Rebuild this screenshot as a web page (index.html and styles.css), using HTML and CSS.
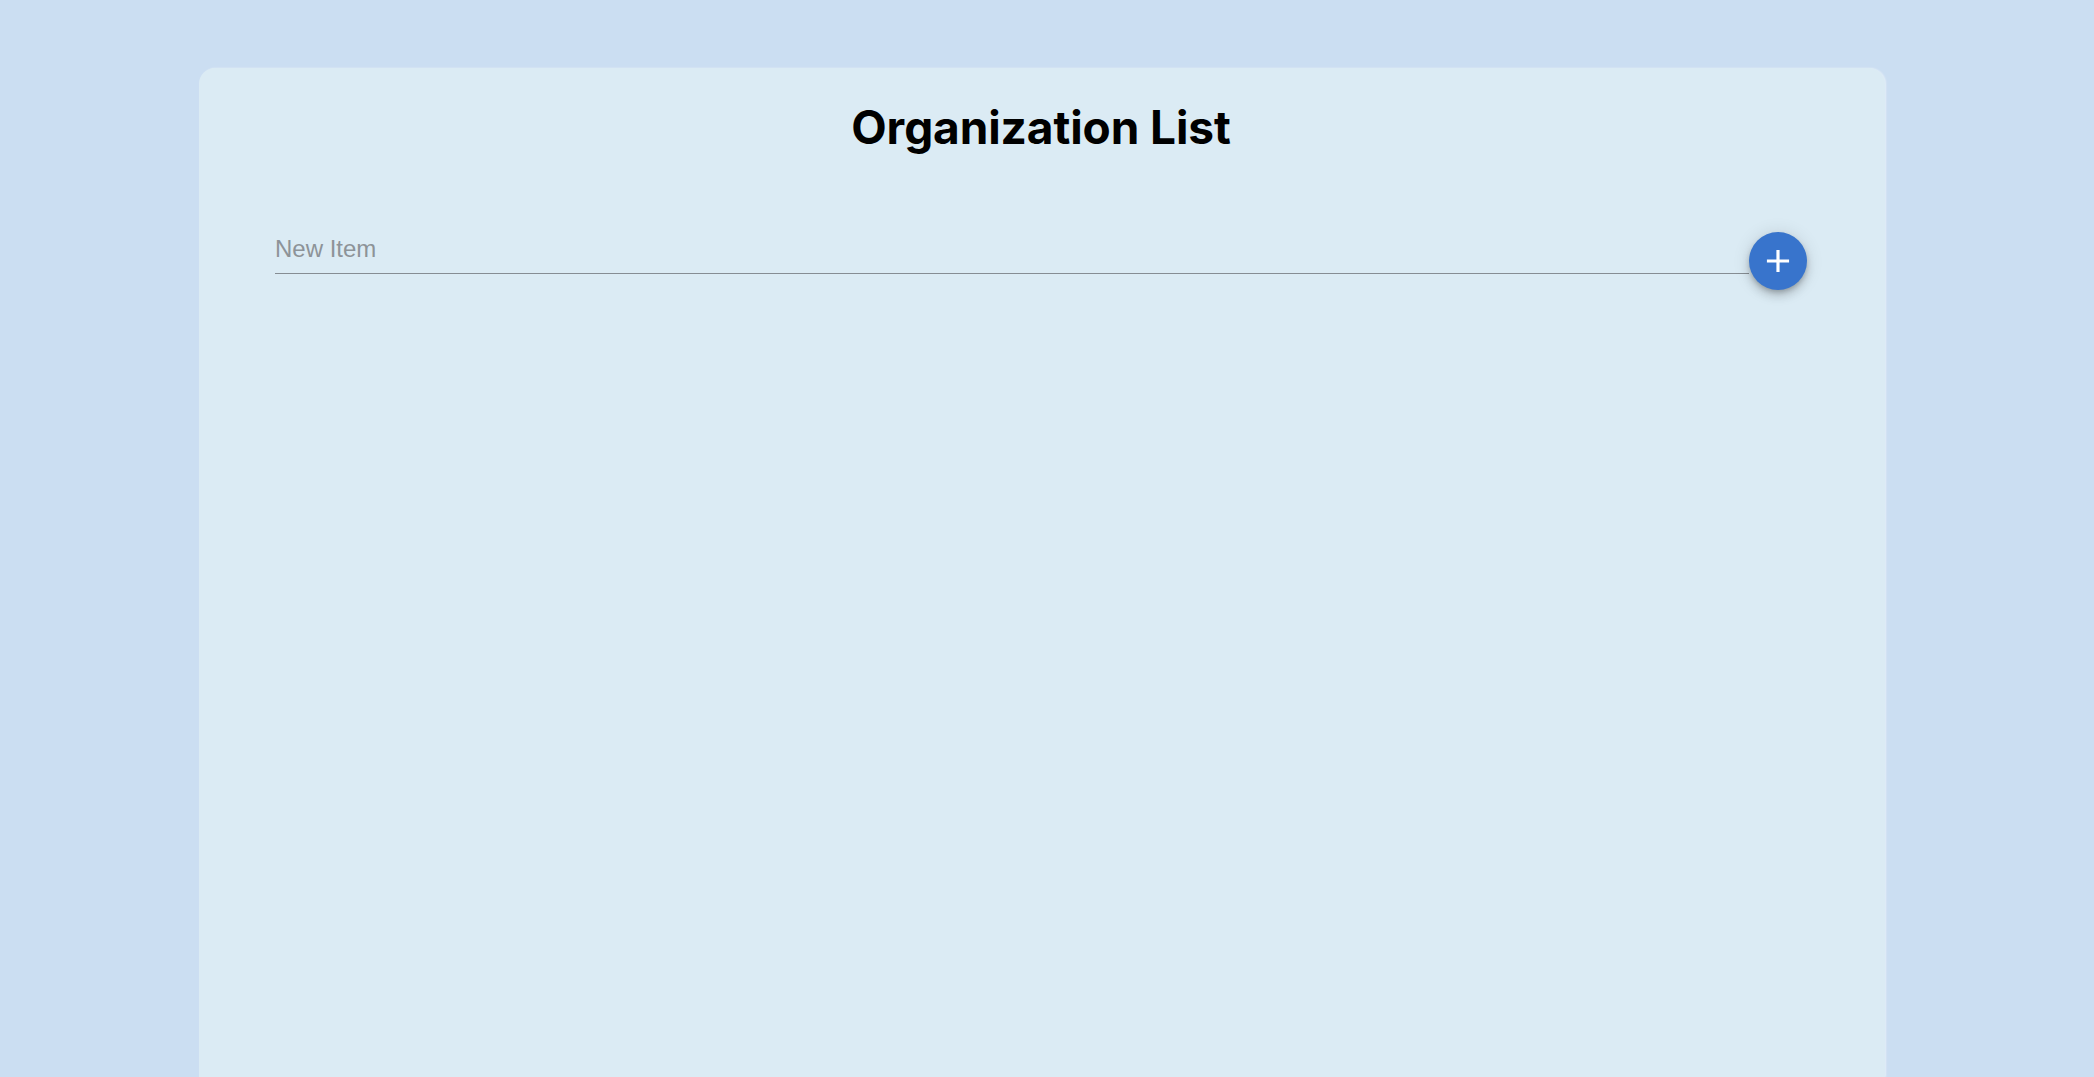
FILE: index.html
```html
<!DOCTYPE html>
<html lang="en">
<head>
<meta charset="utf-8">
<title>Organization List</title>
<link rel="stylesheet" href="styles.css">
</head>
<body>
  <main class="card">
    <h1 class="title">Organization List</h1>
    <form class="add-row">
      <input class="new-item" type="text" placeholder="New Item">
      <button class="fab" type="button" aria-label="Add">
        <svg viewBox="0 0 24 24" width="38" height="38"><path d="M19 13h-6v6h-2v-6H5v-2h6V5h2v6h6v2z" fill="#ffffff"/></svg>
      </button>
    </form>
  </main>
</body>
</html>
```

FILE: styles.css
```css
html, body {
  margin: 0;
  padding: 0;
  height: 100%;
  overflow: hidden;
}
body {
  background: #cbdef2;
  font-family: "Liberation Sans", Arial, sans-serif;
}
.card {
  box-sizing: border-box;
  margin: 68px 0 0 199px;
  width: 1686px;
  height: 1009px;
  background: #dbebf4;
  border-radius: 16px 16px 0 0;
  padding: 32px 78px 0 76px;
  box-shadow: 1px 0 2px rgba(255, 255, 255, 0.5);
}
.title {
  margin: 0;
  font-family: Inter, "Liberation Sans", sans-serif;
  font-weight: 700;
  font-size: 46px;
  line-height: 54px;
  text-align: center;
  color: #000;
  letter-spacing: -0.1px;
}
.add-row {
  display: flex;
  align-items: flex-start;
  margin-top: 78px;
}
.new-item {
  flex: 1;
  min-width: 0;
  margin-top: 3px;
  padding: 0 0 10px 0;
  border: 0;
  border-bottom: 1px solid #868d93;
  background: transparent;
  font-family: "Liberation Sans", Arial, sans-serif;
  font-size: 24px;
  line-height: 28px;
  height: 39px;
  box-sizing: border-box;
  color: #333;
  outline: none;
}
.new-item::placeholder {
  color: #8d9398;
}
.fab {
  flex: none;
  width: 58px;
  height: 58px;
  border: 0;
  border-radius: 50%;
  padding: 0;
  background: #3874cc;
  display: flex;
  align-items: center;
  justify-content: center;
  box-shadow: 0 3px 5px -1px rgba(0,0,0,0.2), 0 6px 10px 0 rgba(0,0,0,0.14), 0 1px 18px 0 rgba(0,0,0,0.12);
  cursor: pointer;
}
```
